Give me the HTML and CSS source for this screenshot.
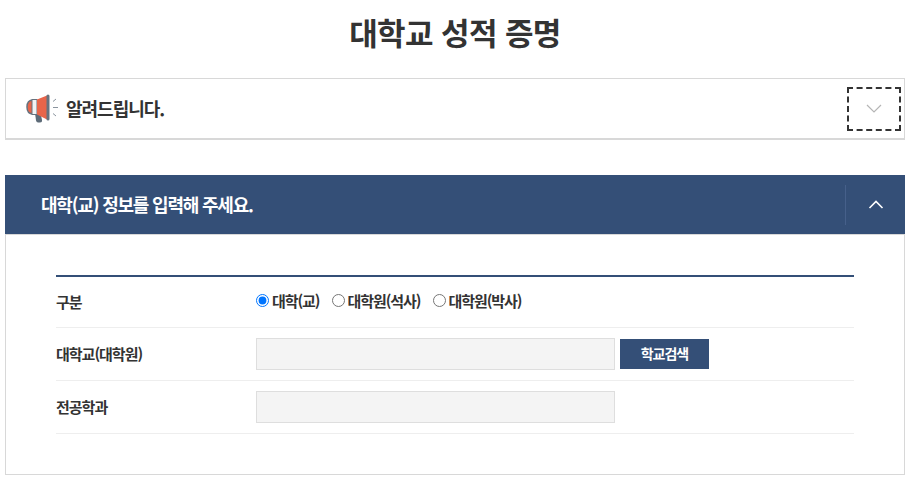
FILE: index.html
```html
<!DOCTYPE html>
<html lang="ko">
<head>
    <meta charset="UTF-8">
    <title>대학교 성적 증명</title>
    <meta name="viewport" content="width=device-width, initial-scale=1.0">
    <link rel="stylesheet" href="styles.css">
</head>
<body>
    <h1 class="page-title">대학교 성적 증명</h1>

    <div class="notice">
        <svg class="notice-icon" width="34" height="30" viewBox="0 0 34 30">
            <path d="M9 19 L14.500 19 L16 26 Q16.300 28.500 14 28.500 L12 28.500 Q10.500 28.500 10 26.500 Z" fill="#5d6b78"/>
            <path d="M7 6 L9 6 L9 20 L7 20 Q1 20 1 13 Q1 6 7 6 Z" fill="#e8654a" stroke="#66727e" stroke-width="1.500"/>
            <rect x="6" y="5.500" width="5" height="15" fill="#f2f3f4" stroke="#66727e" stroke-width="1"/>
            <path d="M11 5.500 L21 1.500 L21 25.500 L11 20.500 Z" fill="#e8654a"/>
            <rect x="20.500" y="0.500" width="3" height="26" rx="1.500" fill="#66727e"/>
            <path d="M27 7.500 L30 5 M27 13.500 L32 13.500 M27 19.500 L30 22" stroke="#8a949e" stroke-width="1" fill="none"/>
        </svg>
        <strong class="notice-text">알려드립니다.</strong>
        <button class="notice-toggle" type="button" aria-label="펼치기">
            <svg width="16" height="9" viewBox="0 0 16 9"><path d="M1 1 L8 8 L15 1" fill="none" stroke="#b5b5b5" stroke-width="1.200"/></svg>
        </button>
    </div>

    <section class="panel">
        <div class="panel-head">
            <h2 class="panel-title">대학(교) 정보를 입력해 주세요.</h2>
            <button class="panel-toggle" type="button" aria-label="접기">
                <svg width="16" height="9" viewBox="0 0 16 9"><path d="M1.500 8 L8 1.500 L14.500 8" fill="none" stroke="#fff" stroke-width="1.600"/></svg>
            </button>
        </div>
        <div class="panel-body">
            <div class="form-table">
                <div class="form-row">
                    <div class="form-label">구분</div>
                    <div class="form-field radios">
                        <label class="radio"><input type="radio" name="kind" checked>대학(교)</label>
                        <label class="radio"><input type="radio" name="kind">대학원(석사)</label>
                        <label class="radio"><input type="radio" name="kind">대학원(박사)</label>
                    </div>
                </div>
                <div class="form-row">
                    <div class="form-label">대학교(대학원)</div>
                    <div class="form-field">
                        <input class="text-input" type="text" disabled>
                        <button class="search-btn" type="button">학교검색</button>
                    </div>
                </div>
                <div class="form-row">
                    <div class="form-label">전공학과</div>
                    <div class="form-field">
                        <input class="text-input" type="text" disabled>
                    </div>
                </div>
            </div>
        </div>
    </section>
</body>
</html>
```
FILE: styles.css
```css
* {
    box-sizing: border-box;
}

html, body {
    height: 483px;
    overflow: hidden;
}

body {
    margin: 0;
    padding: 0 6px 0 5px;
    font-family: "Noto Sans CJK KR", "Noto Sans", sans-serif;
    background: #fff;
    color: #333;
}

.page-title {
    margin: 0;
    height: 78px;
    line-height: 64px;
    text-align: center;
    font-size: 31px;
    font-weight: 700;
    letter-spacing: -0.6px;
}

.notice {
    display: flex;
    align-items: center;
    height: 62px;
    padding: 0 3px 0 20px;
    border: 1px solid #d8d8d8;
    border-bottom-width: 2px;
}

.notice-icon {
    margin-right: 6px;
}

.notice-text {
    margin-top: -2px;
    font-size: 18px;
    font-weight: 700;
    letter-spacing: -1px;
    line-height: 1;
}

.notice-toggle {
    display: flex;
    align-items: center;
    justify-content: center;
    width: 54px;
    height: 44px;
    margin-left: auto;
    padding: 0;
    background: #fff;
    border: 2px dashed #333;
}

.panel {
    margin-top: 35px;
    border: 1px solid #d8d8d8;
    border-top: 0;
    height: 300px;
}

.panel-head {
    display: flex;
    align-items: center;
    height: 60px;
    margin: 0 -1px;
    padding: 0 0 0 36px;
    background: #344f77;
    border-bottom: 1px solid #d8d8d8;
}

.panel-title {
    margin: 0 0 2px;
    color: #fff;
    font-size: 18px;
    font-weight: 700;
    letter-spacing: -1.2px;
}

.panel-toggle {
    display: flex;
    align-items: center;
    justify-content: center;
    width: 60px;
    height: 40px;
    margin-left: auto;
    padding: 0;
    background: none;
    border: 0;
    border-left: 1px solid #46608a;
}

.panel-body {
    padding: 40px 50px 0;
}

.form-table {
    border-top: 2px solid #344f77;
}

.form-row {
    display: flex;
    align-items: center;
    height: 53px;
    border-bottom: 1px solid #eee;
    font-size: 15px;
}

.form-row:first-child {
    height: 51px;
}

.form-label {
    width: 200px;
    margin-top: -2px;
    font-weight: 700;
    letter-spacing: -1px;
}

.form-field {
    display: flex;
    align-items: center;
}

.radios {
    gap: 12px;
    margin-top: -4px;
}

.radio {
    display: flex;
    align-items: center;
    gap: 3px;
    font-weight: 700;
    letter-spacing: -1.05px;
}

.radio input {
    width: 13px;
    height: 13px;
    margin: 0;
}

.text-input {
    width: 359px;
    height: 32px;
    padding: 0 8px;
    background: #f4f4f4;
    border: 1px solid #dedede;
}

.search-btn {
    width: 89px;
    height: 30px;
    margin-left: 5px;
    padding: 0 0 2px;
    background: #344f77;
    border: 0;
    color: #fff;
    font-family: inherit;
    font-size: 14px;
    font-weight: 700;
    letter-spacing: -1px;
}
```
